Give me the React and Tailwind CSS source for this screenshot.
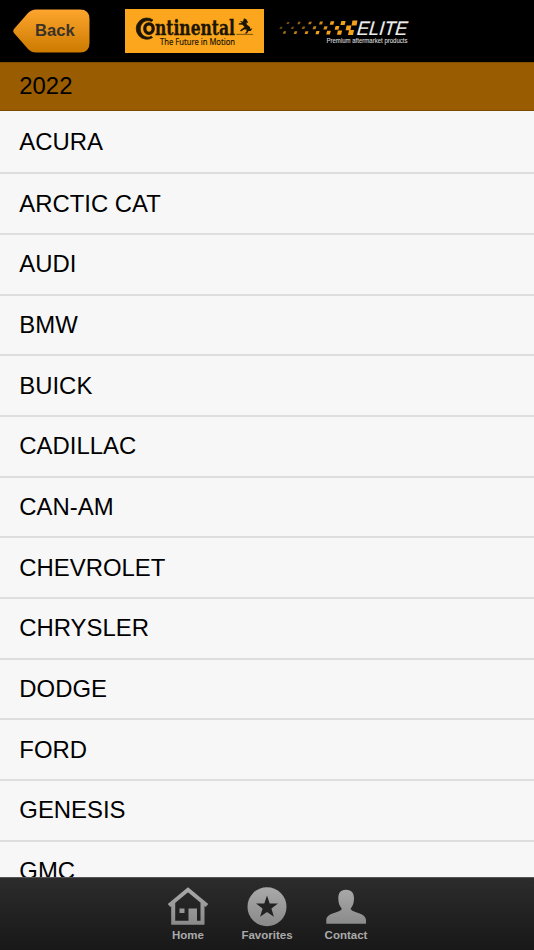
import React from 'react'

const makes = [
  'ACURA',
  'ARCTIC CAT',
  'AUDI',
  'BMW',
  'BUICK',
  'CADILLAC',
  'CAN-AM',
  'CHEVROLET',
  'CHRYSLER',
  'DODGE',
  'FORD',
  'GENESIS',
  'GMC',
]

// top row, middle row, bottom row of the checkered flag
const flag = [
  { x: 18, y: 23, s: 2.2, o: 0.5 }, { x: 29, y: 23, s: 2.4, o: 0.6 }, { x: 40, y: 23, s: 2.7, o: 0.75 }, { x: 51, y: 23, s: 3, o: 0.85 }, { x: 62, y: 23, s: 3.6, o: 1 }, { x: 73, y: 23, s: 4.2, o: 1 }, { x: 84.5, y: 23, s: 5, o: 1 },
  { x: 11, y: 27.8, s: 2.2, o: 0.45 }, { x: 22.5, y: 27.8, s: 2.3, o: 0.5 }, { x: 33.5, y: 27.8, s: 2.6, o: 0.6 }, { x: 44.5, y: 27.8, s: 2.9, o: 0.8 }, { x: 55.5, y: 27.8, s: 3.3, o: 0.9 }, { x: 67, y: 27.8, s: 3.8, o: 1 }, { x: 78.5, y: 27.8, s: 4.8, o: 1 },
  { x: 14.5, y: 32.6, s: 2.5, o: 0.7 }, { x: 25.5, y: 32.6, s: 2.6, o: 0.8 }, { x: 36.5, y: 32.6, s: 2.9, o: 0.9 }, { x: 47.5, y: 32.6, s: 3.2, o: 1 }, { x: 58.5, y: 32.6, s: 3.7, o: 1 }, { x: 69.5, y: 32.6, s: 4.2, o: 1 }, { x: 81, y: 32.6, s: 5, o: 1 },
]

const BackButton = () => (
  <button className="relative w-[77px] h-11 mt-[9px] ml-[12.5px] shrink-0">
    <svg className="block" width="77" height="44" viewBox="0 0 77 44">
      <defs>
        <linearGradient id="back" x1="0" y1="0" x2="0" y2="1">
          <stop offset="0" stopColor="#fda52e" />
          <stop offset="1" stopColor="#cc7a00" />
        </linearGradient>
      </defs>
      <path d="M1 20 L15 4 Q18.500 .5 23 .5 H67 Q76.500 .5 76.500 10 V34 Q76.500 43.500 67 43.500 H23 Q18.500 43.500 15 40 L1 24 Q-.5 22 1 20 Z" fill="url(#back)" />
    </svg>
    <span className="absolute left-[22.5px] top-[9.5px] text-[16.600px] leading-6 font-bold text-[#3b3328]">Back</span>
  </button>
)

const ContinentalLogo = () => (
  <svg className="mt-[9px] ml-[35.500px] shrink-0" width="139" height="44" viewBox="0 0 139 44">
    <rect width="139" height="44" fill="#fba61c" />
    <path d="M28 11 A10.600 10.600 0 1 0 27.500 28.600 L26.500 27.300 A7.800 8.300 0 1 1 26.500 12.500 Z" fill="#1c1503" stroke="#1c1503" strokeWidth=".8" />
    <ellipse cx="24" cy="19.600" rx="4.200" ry="4.800" fill="none" stroke="#1c1503" strokeWidth="3.300" />
    <text x="30" y="25.500" textLength="80" lengthAdjust="spacingAndGlyphs" fontSize="20.500" fontWeight="700" fill="#1c1503" stroke="#1c1503" strokeWidth=".3" className="font-['DejaVu_Serif_Condensed','DejaVu_Serif',serif]">ntinental</text>
    <path d="M111.500 25.400 H128" stroke="#5c410d" strokeWidth=".8" />
    <path d="M119 9.200 L121.500 10.500 L123.300 14 L121.500 13.500 L121.800 15.500 L125 18 L125.300 20 L127.300 19.300 L125.800 22 L123.500 22 L122 24.600 L119.500 24.600 L121.500 22.800 L121.500 20.500 L119 20.500 L116 22.500 L115 21.500 L118 19 L119.500 18 L117.500 15.800 L113.500 15.500 L114 14.300 L117 14 L114.800 12 L118 12.500 Z" fill="#1c1503" />
    <text x="35" y="36" textLength="75" lengthAdjust="spacingAndGlyphs" fontSize="8.200" fill="#1c1503" stroke="#1c1503" strokeWidth=".15" className="font-['Noto_Sans','Open_Sans',sans-serif]">The Future in Motion</text>
  </svg>
)

const EliteLogo = () => (
  <svg className="shrink-0 ml-[6px]" width="150" height="62" viewBox="0 0 150 62">
    {flag.map((f, i) => (
      <path key={i} d={`M${f.x - f.s / 2 + 0.5} ${f.y - f.s / 2} h${f.s} l-1 ${f.s} h-${f.s} Z`} fill="#f5a11c" opacity={f.o} />
    ))}
    <text transform="translate(86.500 34.700) skewX(-6)" textLength="50.500" lengthAdjust="spacingAndGlyphs" fontSize="19.500" fontStyle="italic" fill="#eee" stroke="#eee" strokeWidth=".2" className="font-['Liberation_Sans',sans-serif]">ELITE</text>
    <text x="56.500" y="42.500" textLength="81" lengthAdjust="spacingAndGlyphs" fontSize="6.400" fill="#d8d8d8" stroke="#d8d8d8" strokeWidth=".1" className="font-['Liberation_Sans',sans-serif]">Premium aftermarket products</text>
  </svg>
)

const HomeIcon = () => (
  <svg width="42" height="40" viewBox="0 0 42 40">
    <path d="M2 18.500 L21 2.800 L40 18.500" fill="none" stroke="url(#tab)" strokeWidth="4" />
    <path d="M6.200 16 V35.700 H35.500 V16" fill="none" stroke="url(#tab)" strokeWidth="4" />
    <path d="M12.500 21.500 h5 v4.500 h-5 Z M21.500 21.500 h8.500 v14 h-8.500 Z" fill="url(#tab)" />
  </svg>
)

const StarIcon = () => (
  <svg width="42" height="40" viewBox="0 0 42 40">
    <circle cx="21" cy="19.700" r="19.500" fill="url(#tab)" />
    <path d="M21 8.500 L23.700 16.400 H32 L25.400 21.600 L27.900 29.800 L21 24.900 L14.100 29.800 L16.600 21.600 L10 16.400 H18.300 Z" fill="#222" />
  </svg>
)

const ContactIcon = () => (
  <svg width="42" height="40" viewBox="0 0 42 40">
    <path d="M21 2.800 C27 2.800 29 6.500 29 11.500 C29 16.500 27.300 19.500 25.700 21.500 C25.500 25.500 41 25.500 41 33 V36.700 H1.300 V33 C1.300 25.500 17 25.500 16.700 21.500 C15 19.500 13.300 16.500 13.300 11.500 C13.300 6.500 15 2.800 21 2.800 Z" fill="url(#tab)" />
  </svg>
)

const tabs = [
  { title: 'Home', icon: <HomeIcon /> },
  { title: 'Favorites', icon: <StarIcon /> },
  { title: 'Contact', icon: <ContactIcon /> },
]

const App = () => {
  return (
    <div className="w-full h-screen flex flex-col overflow-hidden bg-[#f7f7f7] font-['Liberation_Sans',Arial,sans-serif]">
      {/* Top bar */}
      <header className="h-[62px] shrink-0 flex items-start bg-black">
        <BackButton />
        <ContinentalLogo />
        <EliteLogo />
      </header>

      {/* Model year */}
      <div className="h-[49px] shrink-0 pl-[19.300px] pb-px flex items-center bg-[#995c00] border-t border-t-[#7f4c00] border-b border-b-[#7a4a00] text-[23.900px] text-black">
        2022
      </div>

      {/* Makes */}
      <ul className="flex-1 min-h-0 overflow-hidden">
        {makes.map((make, index) => (
          <li
            key={make}
            className={`${index === 0 ? 'h-[63.400px]' : 'h-[60.660px]'} pl-[19.300px] flex items-center border-b-2 border-[#dedede] text-[23.900px] text-black`}
          >
            {make}
          </li>
        ))}
      </ul>

      {/* Tab bar */}
      <nav className="h-[73px] shrink-0 flex justify-center gap-[2px] pt-[9px] border-t border-[#555] bg-gradient-to-b from-[#2c2c2c] to-[#181818]">
        <svg className="absolute" width="0" height="0">
          <defs>
            <linearGradient id="tab" gradientUnits="userSpaceOnUse" x1="0" y1="0" x2="0" y2="40">
              <stop offset="0" stopColor="#aaa" />
              <stop offset="1" stopColor="#888" />
            </linearGradient>
          </defs>
        </svg>
        {tabs.map((tab) => (
          <button key={tab.title} className="w-[77px] flex flex-col items-center">
            {tab.icon}
            <span className="text-[11.500px] leading-4 font-bold text-[#aaa]">{tab.title}</span>
          </button>
        ))}
      </nav>
    </div>
  )
}

export default App
